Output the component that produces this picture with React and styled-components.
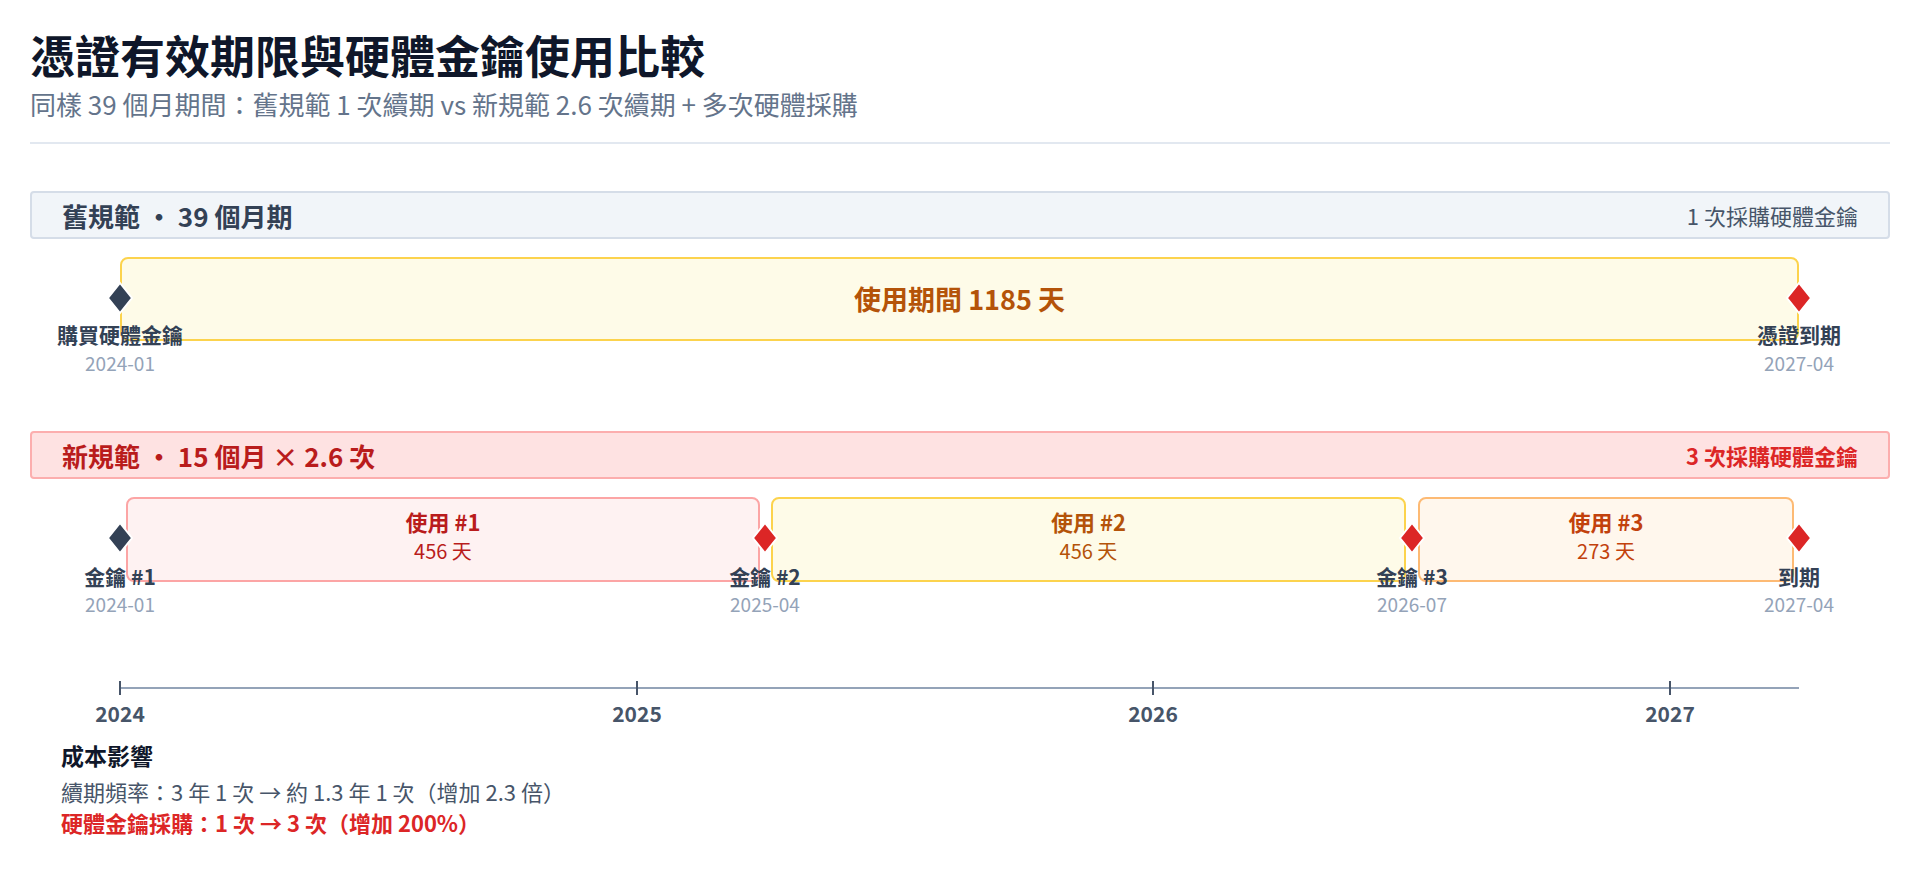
import React from "react";
import styled, { createGlobalStyle } from "styled-components";

const Global = createGlobalStyle`
  body { margin: 0; background: #fff; font-family: "Noto Sans CJK TC", "Noto Sans", sans-serif; }
`;

const Page = styled.div`
  padding: 28px 30px 0 30px;
`;
const Title = styled.h1`
  margin: 0; font-size: 45px; line-height: 54px; font-weight: 700; color: #0f172a;
`;
const Subtitle = styled.div`
  margin-top: 5px; font-size: 26px; line-height: 34px; color: #64748b;
`;
const Divider = styled.div`
  margin-top: 21px; height: 2px; background: #e2e8f0;
`;
const HeaderBar = styled.div`
  margin-top: ${p => p.$mt}px;
  height: 48px; box-sizing: border-box;
  display: flex; align-items: center; justify-content: space-between;
  padding: 0 30px;
  border-radius: 4px;
  background: ${p => p.$bg}; border: 2px solid ${p => p.$border};
`;
const HeaderLeft = styled.div`
  font-size: 26px; font-weight: 700; color: ${p => p.$c};
`;
const HeaderRight = styled.div`
  font-size: 22px; font-weight: ${p => p.$bold ? 700 : 400}; color: ${p => p.$c};
`;
const Track = styled.div`
  position: relative; height: 192px; margin: 0 91px 0 90px;
`;
const Box = styled.div`
  position: absolute; top: 18px; height: ${p => p.$h}px; box-sizing: border-box;
  border: 2px solid ${p => p.$border}; background: ${p => p.$bg};
  border-radius: 8px; display: flex; flex-direction: column; align-items: center;
  justify-content: ${p => p.$center ? "center" : "flex-start"};
  padding-top: ${p => p.$center ? 0 : 7}px;
`;
const BoxTitle = styled.div`
  font-size: ${p => p.$big ? 27 : 22}px; font-weight: 700; color: ${p => p.$c}; line-height: 30px;
`;
const BoxSub = styled.div`
  font-size: 20px; color: ${p => p.$c}; line-height: 30px;
`;
const Marker = styled.div`
  position: absolute; top: ${p => p.$top}px; transform: translate(-50%, -50%);
  width: 30px; height: 34px; display: flex;
`;
const Label = styled.div`
  position: absolute; top: ${p => p.$top}px; transform: translate(-50%, -50%);
  white-space: nowrap; font-size: 21px; font-weight: 700; color: #334155; line-height: 26px;
`;
const DateText = styled(Label)`
  font-weight: 400; font-size: 19px; color: #94a3b8;
`;
const Axis = styled.div`
  position: relative; height: 60px; margin: 0 91px 0 90px;
`;
const AxisLine = styled.div`
  position: absolute; left: 0; right: 0; top: 16px; height: 2px; background: #94a3b8;
`;
const Tick = styled.div`
  position: absolute; top: 10px; width: 2px; height: 14px; background: #475569; transform: translateX(-1px);
`;
const TickLabel = styled.div`
  position: absolute; top: 42px; transform: translate(-50%, -50%);
  font-size: 21px; font-weight: 700; color: #475569;
`;
const Cost = styled.div`
  margin: 10px 0 0 31px;
`;
const CostTitle = styled.div`
  font-size: 23px; font-weight: 700; color: #0f172a; line-height: 28px;
`;
const CostLine = styled.div`
  margin-top: ${p => p.$mt}px; font-size: 22px; line-height: 30px;
  color: ${p => p.$c}; font-weight: ${p => p.$bold ? 700 : 400};
`;

const W = 1679;
const pct = x => `${(x / W) * 100}%`;

function Diamond({ x, top, color }) {
  return (
    <Marker $top={top} style={{ left: pct(x) }}>
      <svg width="30" height="34" viewBox="0 0 30 34">
        <polygon points="15,2 27,17 15,32 3,17" fill={color} stroke="#fff" strokeWidth="2" />
      </svg>
    </Marker>
  );
}

function Point({ x, label, date, color, mTop, lTop, dTop }) {
  return (
    <>
      <Diamond x={x} top={mTop} color={color} />
      <Label $top={lTop} style={{ left: pct(x) }}>{label}</Label>
      <DateText $top={dTop} style={{ left: pct(x) }}>{date}</DateText>
    </>
  );
}

const segs = [
  { l: 6, r: 640, bg: "#fef2f2", border: "#fca5a5", t: "使用 #1", d: "456 天", c: "#b91c1c" },
  { l: 651, r: 1286, bg: "#fefbe8", border: "#fcd34d", t: "使用 #2", d: "456 天", c: "#b45309" },
  { l: 1298, r: 1674, bg: "#fff7ed", border: "#fdba74", t: "使用 #3", d: "273 天", c: "#c2410c" },
];
const newPts = [
  { x: 0, label: "金鑰 #1", date: "2024-01", color: "#334155" },
  { x: 645, label: "金鑰 #2", date: "2025-04", color: "#dc2626" },
  { x: 1292, label: "金鑰 #3", date: "2026-07", color: "#dc2626" },
  { x: 1679, label: "到期", date: "2027-04", color: "#dc2626" },
];
const years = [[0, "2024"], [517, "2025"], [1033, "2026"], [1550, "2027"]];

export default function App() {
  return (
    <Page>
      <Global />
      <Title>憑證有效期限與硬體金鑰使用比較</Title>
      <Subtitle>同樣 39 個月期間：舊規範 1 次續期 vs 新規範 2.6 次續期 + 多次硬體採購</Subtitle>
      <Divider />
      <HeaderBar $mt={47} $bg="#f1f5f9" $border="#d5dde8">
        <HeaderLeft $c="#334155">舊規範 ・ 39 個月期</HeaderLeft>
        <HeaderRight $c="#475569">1 次採購硬體金鑰</HeaderRight>
      </HeaderBar>
      <Track>
        <Box $h={84} $center $bg="#fefbe8" $border="#fcd34d" style={{ left: 0, width: "100%" }}>
          <BoxTitle $big $c="#b45309">使用期間 1185 天</BoxTitle>
        </Box>
        <Point x={0} label="購買硬體金鑰" date="2024-01" color="#334155" mTop={59} lTop={95} dTop={124} />
        <Point x={W} label="憑證到期" date="2027-04" color="#dc2626" mTop={59} lTop={95} dTop={124} />
      </Track>
      <HeaderBar $mt={0} $bg="#fee2e2" $border="#fcaeae">
        <HeaderLeft $c="#b91c1c">新規範 ・ 15 個月 × 2.6 次</HeaderLeft>
        <HeaderRight $bold $c="#dc2626">3 次採購硬體金鑰</HeaderRight>
      </HeaderBar>
      <Track>
        {segs.map(s => (
          <Box key={s.t} $h={85} $bg={s.bg} $border={s.border} style={{ left: pct(s.l), width: pct(s.r - s.l) }}>
            <BoxTitle $c={s.c}>{s.t}</BoxTitle>
            <BoxSub $c={s.c}>{s.d}</BoxSub>
          </Box>
        ))}
        {newPts.map(p => (
          <Point key={p.label} {...p} mTop={59} lTop={97} dTop={125} />
        ))}
      </Track>
      <Axis>
        <AxisLine />
        {years.map(([x, y]) => (
          <React.Fragment key={y}>
            <Tick style={{ left: pct(x) }} />
            <TickLabel style={{ left: pct(x) }}>{y}</TickLabel>
          </React.Fragment>
        ))}
      </Axis>
      <Cost>
        <CostTitle>成本影響</CostTitle>
        <CostLine $mt={7} $c="#475569">續期頻率：3 年 1 次 → 約 1.3 年 1 次（增加 2.3 倍）</CostLine>
        <CostLine $mt={1} $bold $c="#dc2626">硬體金鑰採購：1 次 → 3 次（增加 200%）</CostLine>
      </Cost>
    </Page>
  );
}
